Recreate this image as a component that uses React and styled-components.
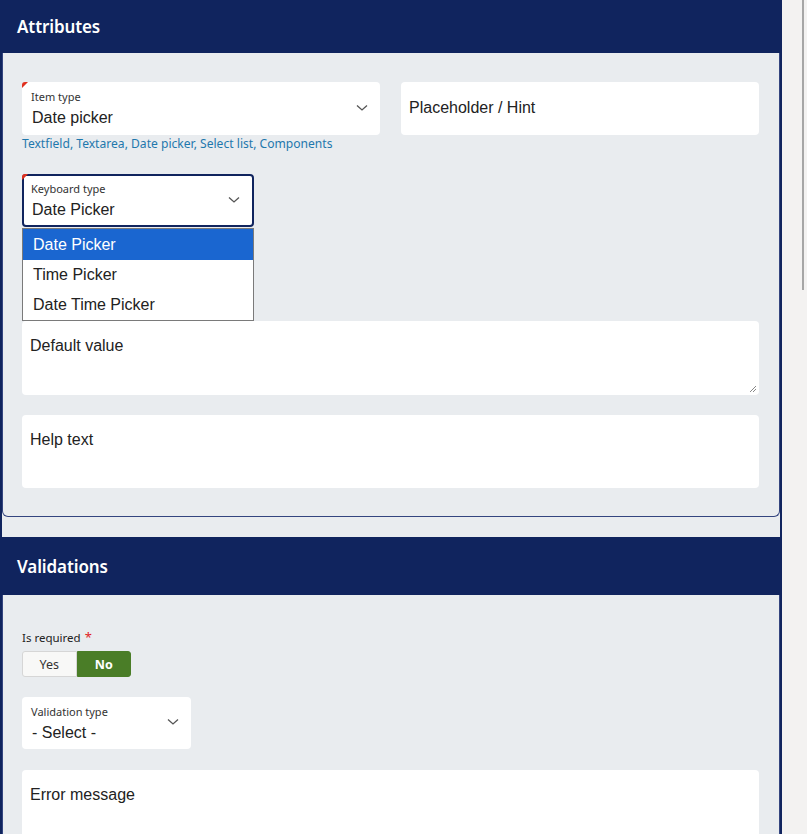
import React from 'react';
import styled, { createGlobalStyle } from 'styled-components';

const GlobalStyle = createGlobalStyle`
  html, body {
    margin: 0;
    padding: 0;
    height: 834px;
    overflow: hidden;
    background: #f3f2f1;
  }
  #root {
    height: 834px;
  }
`;

const navy = '#10245e';

const Page = styled.div`
  display: flex;
  height: 834px;
`;

const Main = styled.div`
  width: 778px;
  border-left: 2px solid ${navy};
  border-right: 2px solid ${navy};
  background: #e9ecef;
  display: flex;
  flex-direction: column;
  gap: 20px;
  overflow: hidden;
`;

const Scrollbar = styled.div`
  flex: 1;
  background: #f3f2f1;
  display: flex;
  justify-content: flex-end;
  padding-right: 3px;
`;

const Thumb = styled.div`
  width: 2px;
  height: 290px;
  background: #a6a6a6;
`;

const Card = styled.section`
  display: flex;
  flex-direction: column;
  flex-shrink: 0;
`;

const CardHeader = styled.div`
  height: ${p => p.$h}px;
  flex-shrink: 0;
  background: ${navy};
  display: flex;
  align-items: center;
  padding-left: 15px;
  color: #fff;
  font-family: "Noto Sans", "Open Sans", sans-serif;
  font-weight: 600;
  font-size: 17px;
  letter-spacing: -0.1px;
`;

const CardBody = styled.div`
  flex-shrink: 0;
  border: 1px solid #34457f;
  border-top: none;
  border-radius: 0 0 6px 6px;
  padding: ${p => p.$pt}px 20px 28px 19px;
  display: flex;
  flex-direction: column;
`;

const Row = styled.div`
  display: grid;
  grid-template-columns: 358px 358px;
  column-gap: 21px;
  margin-bottom: ${p => p.$mb ?? 20}px;
  flex-shrink: 0;
`;

const FieldGroup = styled.div`
  position: relative;
  flex-shrink: 0;
  display: flex;
  flex-direction: column;
  width: ${p => (p.$w ? `${p.$w}px` : 'auto')};
`;

const SelectBox = styled.div`
  position: relative;
  flex-shrink: 0;
  box-sizing: border-box;
  height: ${p => p.$h ?? 53}px;
  background: #fff;
  border-radius: 4px;
  border: ${p => (p.$focused ? `2px solid ${navy}` : 'none')};
  padding: ${p => (p.$focused ? '6px 7px 0 7px' : '8px 9px 0 9px')};
  display: flex;
  flex-direction: column;
  gap: 4px;

  ${p =>
    p.$required &&
    `
    &::before {
      content: '';
      position: absolute;
      top: ${p.$focused ? -2 : 0}px;
      left: ${p.$focused ? -2 : 0}px;
      width: 0;
      height: 0;
      border-top: 6px solid #e0301e;
      border-right: 6px solid transparent;
      border-top-left-radius: 3px;
    }
  `}
`;

const SmallLabel = styled.span`
  font-family: "Noto Sans", "Open Sans", sans-serif;
  font-size: 11px;
  line-height: 14px;
  color: #333;
`;

const Value = styled.span`
  font-family: "Liberation Sans", Arial, sans-serif;
  font-size: 16px;
  line-height: 20px;
  color: #222;
  padding-left: 1px;
`;

const Chevron = styled.svg`
  position: absolute;
  right: 12px;
  top: 50%;
  margin-top: -5px;
  width: 12px;
  height: 8px;
`;

const Input = styled.div`
  box-sizing: border-box;
  height: 53px;
  background: #fff;
  border-radius: 4px;
  padding: 0 8px 2px;
  display: flex;
  align-items: center;
  font-family: "Liberation Sans", Arial, sans-serif;
  font-size: 16px;
  color: #222;
`;

const TextArea = styled.div`
  position: relative;
  box-sizing: border-box;
  height: ${p => p.$h}px;
  background: #fff;
  border-radius: 4px;
  padding: 15px 8px;
  font-family: "Liberation Sans", Arial, sans-serif;
  font-size: 16px;
  line-height: 20px;
  color: #222;
  margin-bottom: ${p => p.$mb ?? 0}px;
  flex-shrink: 0;
`;

const Grip = styled.svg`
  position: absolute;
  right: 2px;
  bottom: 2px;
  width: 9px;
  height: 9px;
`;

const Hint = styled.div`
  margin-top: 2px;
  font-family: "Noto Sans", "Open Sans", sans-serif;
  font-size: 12.1px;
  line-height: 14px;
  color: #1f78ad;
  white-space: nowrap;
`;

const Dropdown = styled.ul`
  position: absolute;
  top: 54px;
  left: 0;
  width: 232px;
  box-sizing: border-box;
  margin: 0;
  padding: 0;
  list-style: none;
  background: #fff;
  border: 1px solid #7a7a7a;
  z-index: 2;
`;

const Option = styled.li`
  height: ${p => (p.$active ? 31 : 30)}px;
  display: flex;
  align-items: center;
  padding-left: 10px;
  font-family: "Liberation Sans", Arial, sans-serif;
  font-size: 16px;
  color: ${p => (p.$active ? '#fff' : '#222')};
  background: ${p => (p.$active ? '#1a66d0' : '#fff')};
`;

const Spacer = styled.div`
  height: ${p => p.$h}px;
  flex-shrink: 0;
`;

const FieldLabel = styled.div`
  font-family: "Noto Sans", "Open Sans", sans-serif;
  font-size: 11.5px;
  line-height: 18px;
  color: #222;
  margin-bottom: 4px;
`;

const Star = styled.span`
  color: #e01e1e;
  margin-left: 4px;
  font-size: 13px;
`;

const Toggle = styled.div`
  display: flex;
  flex-shrink: 0;
  width: 109px;
  height: 26px;
  margin-bottom: 20px;
`;

const ToggleBtn = styled.div`
  flex: 1;
  display: flex;
  align-items: center;
  justify-content: center;
  box-sizing: border-box;
  font-family: "Noto Sans", "Open Sans", sans-serif;
  font-size: 12.5px;
  font-weight: ${p => (p.$on ? 700 : 400)};
  color: ${p => (p.$on ? '#fff' : '#333')};
  background: ${p => (p.$on ? '#4a7d27' : '#f8f8f7')};
  border: 1px solid ${p => (p.$on ? '#4a7d27' : '#d6d6d6')};
  border-radius: ${p => (p.$on ? '0 3px 3px 0' : '3px 0 0 3px')};
`;

const ChevronIcon = () => (
  <Chevron viewBox="0 0 12 8">
    <path d="M1 1.5 L6 6 L11 1.5" fill="none" stroke="#555" strokeWidth="1.3" />
  </Chevron>
);

const Select = ({ label, value, focused, required, h, children }) => (
  <SelectBox $focused={focused} $required={required} $h={h}>
    <SmallLabel>{label}</SmallLabel>
    <Value>{value}</Value>
    <ChevronIcon />
    {children}
  </SelectBox>
);

const keyboardOptions = ['Date Picker', 'Time Picker', 'Date Time Picker'];

export default function App() {
  return (
    <>
      <GlobalStyle />
      <Page>
        <Main>
          <Card>
            <CardHeader $h={53}>Attributes</CardHeader>
            <CardBody $pt={29}>
              <Row $mb={23}>
                <FieldGroup>
                  <Select label="Item type" value="Date picker" required />
                  <Hint>Textfield, Textarea, Date picker, Select list, Components</Hint>
                </FieldGroup>
                <FieldGroup>
                  <Input>Placeholder / Hint</Input>
                </FieldGroup>
              </Row>
              <FieldGroup $w={232}>
                <Select label="Keyboard type" value="Date Picker" focused required />
                <Dropdown>
                  {keyboardOptions.map((o, i) => (
                    <Option key={o} $active={i === 0}>{o}</Option>
                  ))}
                </Dropdown>
              </FieldGroup>
              <Spacer $h={94} />
              <TextArea $h={74} $mb={20}>
                Default value
                <Grip viewBox="0 0 9 9">
                  <path d="M8 2 L2 8 M8 5 L5 8" stroke="#888" strokeWidth="1" />
                </Grip>
              </TextArea>
              <TextArea $h={73}>Help text</TextArea>
            </CardBody>
          </Card>
          <Card>
            <CardHeader $h={58}>Validations</CardHeader>
            <CardBody $pt={33}>
              <FieldLabel>
                Is required<Star>*</Star>
              </FieldLabel>
              <Toggle>
                <ToggleBtn>Yes</ToggleBtn>
                <ToggleBtn $on>No</ToggleBtn>
              </Toggle>
              <FieldGroup $w={169}>
                <Select label="Validation type" value="- Select -" h={52} />
              </FieldGroup>
              <Spacer $h={21} />
              <TextArea $h={90}>Error message</TextArea>
            </CardBody>
          </Card>
        </Main>
        <Scrollbar>
          <Thumb />
        </Scrollbar>
      </Page>
    </>
  );
}
